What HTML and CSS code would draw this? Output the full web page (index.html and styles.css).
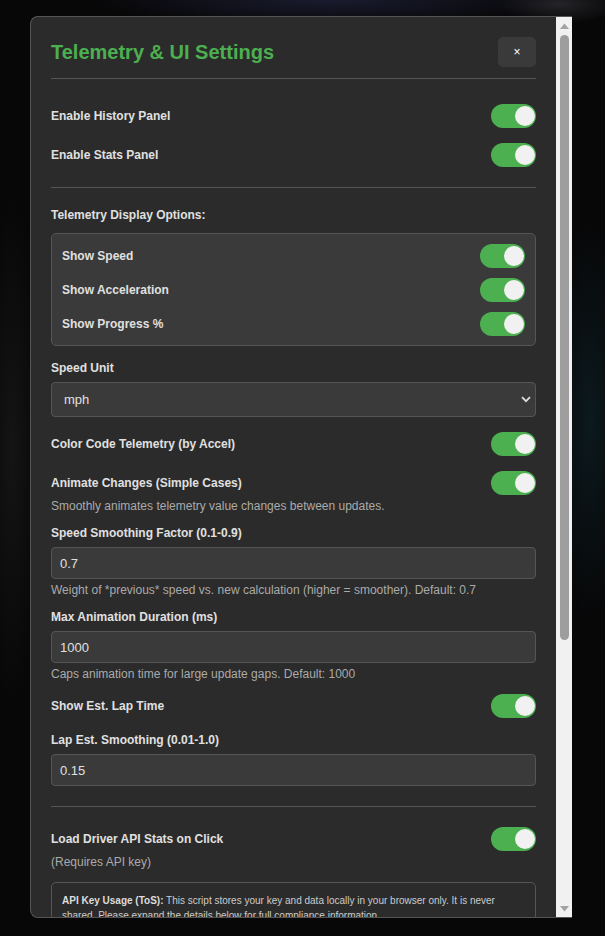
FILE: index.html
```html
<!DOCTYPE html>
<html>
    <head>
        <meta charset="utf-8">
        <title>Telemetry &amp; UI Settings</title>
        <link rel="stylesheet" href="styles.css">
    </head>
    <body>
        <div class="modal">
            <div class="modal-body">
                <div class="modal-header">
                    <h2 class="modal-title">Telemetry &amp; UI Settings</h2>
                    <button class="close-btn">&times;</button>
                </div>

                <div class="setting toggle-row">
                    <span class="label">Enable History Panel</span>
                    <label class="switch"><input type="checkbox" checked><span class="slider"></span></label>
                </div>
                <div class="setting toggle-row">
                    <span class="label">Enable Stats Panel</span>
                    <label class="switch"><input type="checkbox" checked><span class="slider"></span></label>
                </div>

                <hr class="sep">

                <div class="setting">
                    <div class="label group-label">Telemetry Display Options:</div>
                    <div class="sub-box">
                        <div class="toggle-row">
                            <span class="label">Show Speed</span>
                            <label class="switch"><input type="checkbox" checked><span class="slider"></span></label>
                        </div>
                        <div class="toggle-row">
                            <span class="label">Show Acceleration</span>
                            <label class="switch"><input type="checkbox" checked><span class="slider"></span></label>
                        </div>
                        <div class="toggle-row">
                            <span class="label">Show Progress %</span>
                            <label class="switch"><input type="checkbox" checked><span class="slider"></span></label>
                        </div>
                    </div>
                </div>

                <div class="setting">
                    <label class="label field-label">Speed Unit</label>
                    <div class="select-wrap">
                        <select class="select">
                            <option>mph</option>
                            <option>km/h</option>
                        </select>
                        <svg class="chevron" width="10" height="7" viewBox="0 0 10 7"><path d="M1 1.2 L5 5.2 L9 1.2" fill="none" stroke="#ddd" stroke-width="1.8"/></svg>
                    </div>
                </div>

                <div class="setting toggle-row">
                    <span class="label">Color Code Telemetry (by Accel)</span>
                    <label class="switch"><input type="checkbox" checked><span class="slider"></span></label>
                </div>

                <div class="setting with-desc">
                    <div class="toggle-row">
                        <span class="label">Animate Changes (Simple Cases)</span>
                        <label class="switch"><input type="checkbox" checked><span class="slider"></span></label>
                    </div>
                    <div class="desc">Smoothly animates telemetry value changes between updates.</div>
                </div>

                <div class="setting with-desc">
                    <label class="label field-label">Speed Smoothing Factor (0.1-0.9)</label>
                    <input class="input" type="text" value="0.7">
                    <div class="desc">Weight of *previous* speed vs. new calculation (higher = smoother). Default: 0.7</div>
                </div>

                <div class="setting with-desc">
                    <label class="label field-label">Max Animation Duration (ms)</label>
                    <input class="input" type="text" value="1000">
                    <div class="desc">Caps animation time for large update gaps. Default: 1000</div>
                </div>

                <div class="setting toggle-row">
                    <span class="label">Show Est. Lap Time</span>
                    <label class="switch"><input type="checkbox" checked><span class="slider"></span></label>
                </div>

                <div class="setting">
                    <label class="label field-label">Lap Est. Smoothing (0.01-1.0)</label>
                    <input class="input" type="text" value="0.15">
                </div>

                <hr class="sep">

                <div class="setting with-desc">
                    <div class="toggle-row">
                        <span class="label">Load Driver API Stats on Click</span>
                        <label class="switch"><input type="checkbox" checked><span class="slider"></span></label>
                    </div>
                    <div class="desc">(Requires API key)</div>
                </div>

                <div class="setting tos-box">
                    <p><strong>API Key Usage (ToS):</strong> This script stores your key and data locally in your browser only. It is never shared. Please expand the details below for full compliance information.</p>
                    <details>
                        <summary>View API Terms of Service compliance details</summary>
                    </details>
                </div>

                <div class="setting with-desc">
                    <label class="label field-label">Driver API Key</label>
                    <input class="input" type="password" placeholder="Enter your API key">
                    <div class="desc">Used only for driver stats requests. Stored locally.</div>
                </div>

                <hr class="sep">

                <div class="actions">
                    <button class="btn btn-secondary">Reset Defaults</button>
                    <button class="btn btn-primary">Save Settings</button>
                </div>
            </div>

            <div class="scrollbar">
                <div class="sb-btn">
                    <svg width="9" height="6" viewBox="0 0 9 6"><path d="M0 6 L4.5 0.5 L9 6 Z" fill="#a3a3a3"/></svg>
                </div>
                <div class="sb-track">
                    <div class="sb-thumb"></div>
                </div>
                <div class="sb-btn">
                    <svg width="9" height="6" viewBox="0 0 9 6"><path d="M0 0 L9 0 L4.5 5.5 Z" fill="#a3a3a3"/></svg>
                </div>
            </div>
        </div>
    </body>
</html>
```

FILE: styles.css
```css
html, body {
    margin: 0;
    padding: 0;
    height: 100%;
    overflow: hidden;
}

body {
    padding: 16px 0 0 30px;
    box-sizing: border-box;
    background:
        radial-gradient(ellipse 240px 26px at 330px 0, rgba(45, 48, 85, 0.5), transparent),
        radial-gradient(ellipse 60px 20px at 560px 4px, rgba(90, 90, 100, 0.35), transparent),
        radial-gradient(ellipse 40px 200px at 590px 420px, rgba(20, 60, 70, 0.35), transparent),
        radial-gradient(ellipse 30px 260px at 12px 450px, rgba(60, 60, 60, 0.25), transparent),
        #070708;
    font-family: "Liberation Sans", Arial, sans-serif;
    color: #e0e0e0;
}

.modal {
    display: flex;
    width: 542px;
    height: 902px;
    box-sizing: border-box;
    background: #2b2b2b;
    border: 1px solid #555;
    border-right: 0;
    border-radius: 8px 0 0 8px;
    overflow: hidden;
}

.modal-body {
    flex: 1;
    min-width: 0;
    padding: 20px;
    overflow: hidden;
}

/* fake scrollbar, the real one is not drawn in the screenshot */
.scrollbar {
    width: 16px;
    display: flex;
    flex-direction: column;
    background: #f1f1f1;
}

.sb-btn {
    height: 17px;
    display: flex;
    align-items: center;
    justify-content: center;
}

.sb-track {
    flex: 1;
    padding-top: 1px;
}

.sb-thumb {
    width: 9px;
    height: 605px;
    margin: 0 auto;
    border-radius: 5px;
    background: #9e9e9e;
}

.modal-header {
    display: flex;
    align-items: center;
    justify-content: space-between;
    padding-bottom: 11px;
    border-bottom: 1px solid #555;
    margin-bottom: 25px;
}

.modal-title {
    margin: 0;
    font-size: 20px;
    font-weight: bold;
    color: #4caf50;
}

.close-btn {
    width: 38px;
    height: 30px;
    border: 0;
    border-radius: 5px;
    background: #3a3a3a;
    color: #fff;
    font: 12px/30px "Liberation Sans", Arial, sans-serif;
    padding: 0;
    cursor: pointer;
}

.setting {
    margin-bottom: 15px;
}

.setting.with-desc {
    margin-bottom: 14px;
}

.toggle-row {
    display: flex;
    align-items: center;
    justify-content: space-between;
    height: 24px;
}

.label {
    font-size: 12px;
    line-height: 14px;
    font-weight: bold;
    color: #e0e0e0;
}

.group-label {
    display: block;
    margin-bottom: 11px;
}

.field-label {
    display: block;
    margin-bottom: 7px;
}

.sep {
    border: 0;
    border-top: 1px solid #555;
    margin: 20px 0;
}

.sub-box {
    background: #3a3a3a;
    border: 1px solid #555;
    border-radius: 5px;
    padding: 10px 10px 9px;
}

.sub-box .toggle-row {
    margin-bottom: 10px;
}

.sub-box .toggle-row:last-child {
    margin-bottom: 0;
}

.switch {
    position: relative;
    display: inline-block;
    width: 45px;
    height: 24px;
    flex-shrink: 0;
}

.switch input {
    display: none;
}

.slider {
    position: absolute;
    top: 0;
    left: 0;
    right: 0;
    bottom: 0;
    background: #666;
    border-radius: 12px;
    cursor: pointer;
}

.slider:before {
    content: "";
    position: absolute;
    width: 20px;
    height: 20px;
    left: 2px;
    top: 2px;
    background: #f1f1f1;
    border-radius: 50%;
}

.switch input:checked + .slider {
    background: #4caf50;
}

.switch input:checked + .slider:before {
    transform: translateX(22px);
}

.desc {
    margin-top: 5px;
    font-size: 12px;
    line-height: 12px;
    color: #aaa;
}

.input, .select {
    display: block;
    width: 100%;
    box-sizing: border-box;
    background: #3a3a3a;
    border: 1px solid #555;
    border-radius: 4px;
    color: #e0e0e0;
    font: 13px "Liberation Sans", Arial, sans-serif;
    outline: none;
}

.input {
    height: 32px;
    padding: 0 8px;
}

.input::placeholder {
    color: #888;
}

.select-wrap {
    position: relative;
}

.select {
    height: 35px;
    padding: 0 12px;
    appearance: none;
    -webkit-appearance: none;
}

.chevron {
    position: absolute;
    right: 5px;
    top: 14px;
}

.tos-box {
    border: 1px solid #555;
    border-radius: 5px;
    padding: 10px;
    font-size: 10px;
    line-height: 15px;
    color: #ccc;
}

.tos-box p {
    margin: 0 0 8px;
}

.tos-box strong {
    color: #ddd;
}

.tos-box summary {
    color: #4caf50;
    cursor: pointer;
}

.actions {
    display: flex;
    justify-content: flex-end;
    gap: 10px;
}

.btn {
    height: 34px;
    padding: 0 16px;
    border: 0;
    border-radius: 4px;
    font: bold 13px "Liberation Sans", Arial, sans-serif;
    color: #fff;
    cursor: pointer;
}

.btn-primary {
    background: #4caf50;
}

.btn-secondary {
    background: #555;
}
```
